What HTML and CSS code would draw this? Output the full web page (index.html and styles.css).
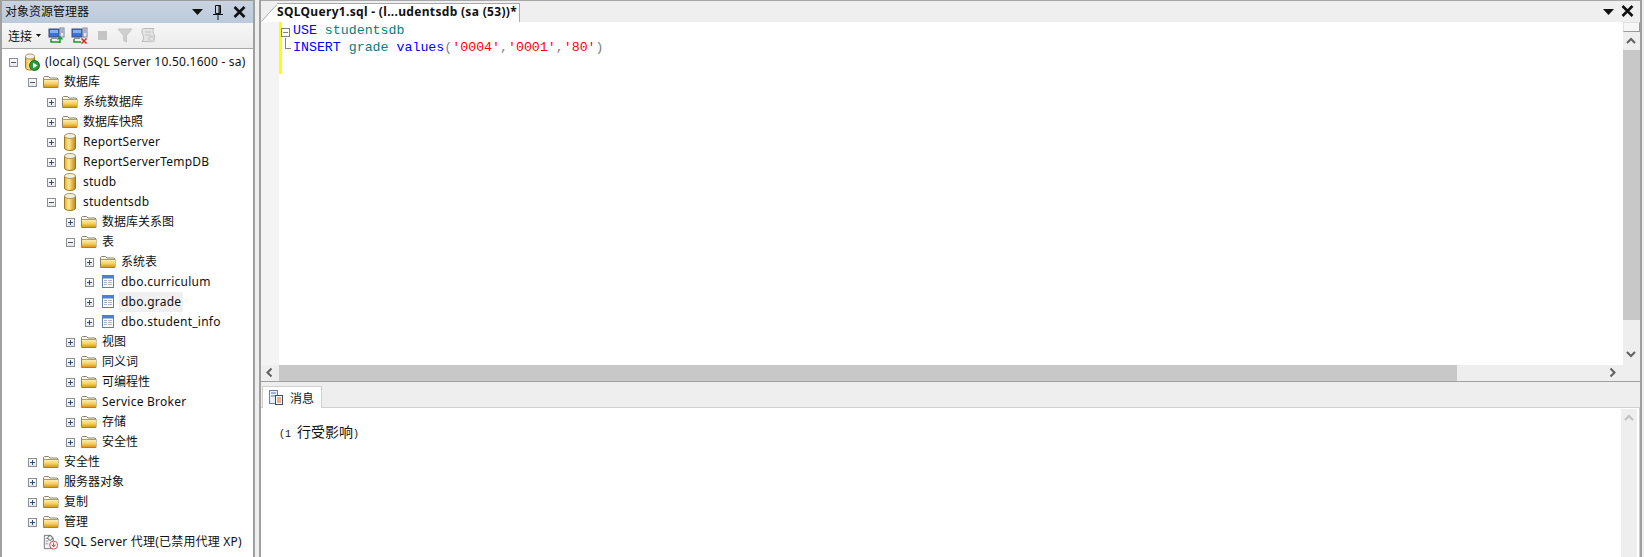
FILE: index.html
```html
<!DOCTYPE html>
<html lang="zh">
<head>
<meta charset="utf-8">
<title>SQL Server Management Studio</title>
<link rel="stylesheet" href="styles.css">
</head>
<body>
<svg class="defs" width="0" height="0" aria-hidden="true">
  <defs>
    <linearGradient id="fg" x1="0" y1="0" x2="0" y2="1"><stop offset="0" stop-color="#ffefb0"/><stop offset=".5" stop-color="#fbd060"/><stop offset="1" stop-color="#d89820"/></linearGradient>
    <linearGradient id="dg" x1="0" y1="0" x2="1" y2="0"><stop offset="0" stop-color="#e6b030"/><stop offset=".4" stop-color="#ffe890"/><stop offset="1" stop-color="#c08414"/></linearGradient>
    <symbol id="folder" viewBox="0 0 16 16"><path d="M.5 13.500V3.500l1-1h4l1.500 1.500h7l1 1v8.500z" fill="#f8f6e8" stroke="#8c8468"/><rect x="1" y="6" width="14" height="7" fill="url(#fg)"/><path d="M1 5.500h14" stroke="#a89c70"/></symbol>
    <symbol id="db" viewBox="0 0 16 20"><path d="M2.500 4v12c0 1.500 2.500 2.500 5.500 2.500s5.500-1 5.500-2.500V4z" fill="url(#dg)" stroke="#a07818"/><ellipse cx="8" cy="4" rx="5.500" ry="2.500" fill="#f4f0e0" stroke="#a89868"/></symbol>
    <symbol id="table" viewBox="0 0 16 16"><rect x="2.500" y="1.500" width="11" height="12" fill="#fff" stroke="#5a80b8"/><rect x="2" y="1" width="12" height="3.500" fill="#4f7fd0"/><path d="M4 6.500h3M8 6.500h4M4 8.500h3M8 8.500h4M4 10.500h3M8 10.500h4" stroke="#a8b4c4"/></symbol>
    <symbol id="server" viewBox="0 0 16 18"><path d="M1.500 3.500v11c0 1.500 2 2.500 4.500 2.500s4.500-1 4.500-2.500v-11z" fill="url(#dg)" stroke="#a07818"/><ellipse cx="6" cy="3.500" rx="4.500" ry="2.500" fill="#f4f0e0" stroke="#a89868"/><circle cx="10.500" cy="12.500" r="5" fill="#2c9a3c" stroke="#1a6e2c"/><path d="M9 9.800l4.500 2.700L9 15.200z" fill="#fff"/></symbol>
    <symbol id="agent" viewBox="0 0 18 18"><path d="M1.500 16.500v-15h7l3 3v12z" fill="#f4f4f4" stroke="#6a6a7a"/><path d="M3 5h4M3 8h3M3 11h3" stroke="#8a8a9a"/><circle cx="8" cy="4.500" r="2.500" fill="#fff" stroke="#555"/><circle cx="12" cy="12.500" r="4.500" fill="#fff" stroke="#c04040"/><path d="M12 9.500v4M10 12l2 2.500 2-2.500" stroke="#c02020" fill="none"/></symbol>
    <symbol id="monitor" viewBox="0 0 17 17"><rect x="1" y="2" width="10" height="8" fill="#3a70d8" stroke="#3c4c78"/><rect x="2" y="3" width="8" height="3" fill="#80b0f0"/><rect x="12" y="1" width="4" height="9" fill="#e8e8f0" stroke="#7a8098"/><path d="M13 3h2M13 5h2" stroke="#6a7088"/><rect x="3" y="10" width="6" height="2" fill="#8a90a4"/></symbol>
  </defs>
</svg>

<div class="app">
  <aside class="explorer">
    <header class="pane-title">
      <span class="pane-name">对象资源管理器</span>
      <svg class="ic-menu" width="11" height="6" viewBox="0 0 11 6"><path d="M0 0h11L5.500 6z" fill="#111"/></svg>
      <svg class="ic-pin" width="10" height="15" viewBox="0 0 10 15"><path d="M2.500.5h5v8h-5zM6 1v7M7 1v7M0 9.500h10M5 10v5" fill="none" stroke="#111"/></svg>
      <svg class="ic-close" width="13" height="12" viewBox="0 0 13 12"><path d="M1.500 1l10 10M11.500 1l-10 10" stroke="#111" stroke-width="2.600"/></svg>
    </header>
    <div class="pane-tools">
      <span class="connect">连接</span>
      <svg class="ic-caret" width="5" height="3" viewBox="0 0 5 3"><path d="M0 0h5L2.500 3z" fill="#111"/></svg>
      <svg class="tool t1" width="17" height="17" viewBox="0 0 17 17"><use href="#monitor"/><path d="M3 12v3h9" fill="none" stroke="#169a2c" stroke-width="1.500"/><path d="M12 16V10M9.500 12.500L12 10l2.500 2.500" fill="none" stroke="#169a2c" stroke-width="1.500"/></svg>
      <svg class="tool t2" width="17" height="17" viewBox="0 0 17 17"><use href="#monitor"/><path d="M3 12v3h7" fill="none" stroke="#169a2c" stroke-width="1.500"/><path d="M10.500 11.500l5 5M15.500 11.500l-5 5" stroke="#e02020" stroke-width="1.500"/></svg>
      <span class="stop"></span>
      <svg class="tool t3" width="16" height="15" viewBox="0 0 16 15"><path d="M1 1h14L9.500 7.500V14l-3-1.500v-5z" fill="#cfcfcf" stroke="#c4c4c4"/></svg>
      <svg class="tool t4" width="17" height="17" viewBox="0 0 17 17"><path d="M3 1.500h11c-2 2-1 4 0 6s1 5-1 7H2c2-2 2-4 1-6s-2-5 0-7z" fill="#e4e4e4" stroke="#bcbcbc"/><path d="M5 5h6M5 8h6" stroke="#c4c4c4"/><circle cx="11.500" cy="12" r="3.500" fill="#cfcfcf"/><path d="M10 10.500l3 3M13 10.500l-3 3" stroke="#f0f0f0"/></svg>
    </div>
    <ul class="tree">
      <li class="row l0"><span class="tog minus"></span><svg class="icon"><use href="#server"/></svg><span class="label latin">(local) (SQL Server 10.50.1600 - sa)</span></li>
      <li class="row l1"><span class="tog minus"></span><svg class="icon"><use href="#folder"/></svg><span class="label">数据库</span></li>
      <li class="row l2"><span class="tog plus"></span><svg class="icon"><use href="#folder"/></svg><span class="label">系统数据库</span></li>
      <li class="row l2"><span class="tog plus"></span><svg class="icon"><use href="#folder"/></svg><span class="label">数据库快照</span></li>
      <li class="row l2"><span class="tog plus"></span><svg class="icon"><use href="#db"/></svg><span class="label latin">ReportServer</span></li>
      <li class="row l2"><span class="tog plus"></span><svg class="icon"><use href="#db"/></svg><span class="label latin">ReportServerTempDB</span></li>
      <li class="row l2"><span class="tog plus"></span><svg class="icon"><use href="#db"/></svg><span class="label latin">studb</span></li>
      <li class="row l2"><span class="tog minus"></span><svg class="icon"><use href="#db"/></svg><span class="label latin">studentsdb</span></li>
      <li class="row l3"><span class="tog plus"></span><svg class="icon"><use href="#folder"/></svg><span class="label">数据库关系图</span></li>
      <li class="row l3"><span class="tog minus"></span><svg class="icon"><use href="#folder"/></svg><span class="label">表</span></li>
      <li class="row l4"><span class="tog plus"></span><svg class="icon"><use href="#folder"/></svg><span class="label">系统表</span></li>
      <li class="row l4"><span class="tog plus"></span><svg class="icon"><use href="#table"/></svg><span class="label latin">dbo.curriculum</span></li>
      <li class="row l4"><span class="tog plus"></span><svg class="icon"><use href="#table"/></svg><span class="label latin selected">dbo.grade</span></li>
      <li class="row l4"><span class="tog plus"></span><svg class="icon"><use href="#table"/></svg><span class="label latin">dbo.student_info</span></li>
      <li class="row l3"><span class="tog plus"></span><svg class="icon"><use href="#folder"/></svg><span class="label">视图</span></li>
      <li class="row l3"><span class="tog plus"></span><svg class="icon"><use href="#folder"/></svg><span class="label">同义词</span></li>
      <li class="row l3"><span class="tog plus"></span><svg class="icon"><use href="#folder"/></svg><span class="label">可编程性</span></li>
      <li class="row l3"><span class="tog plus"></span><svg class="icon"><use href="#folder"/></svg><span class="label latin">Service Broker</span></li>
      <li class="row l3"><span class="tog plus"></span><svg class="icon"><use href="#folder"/></svg><span class="label">存储</span></li>
      <li class="row l3"><span class="tog plus"></span><svg class="icon"><use href="#folder"/></svg><span class="label">安全性</span></li>
      <li class="row l1"><span class="tog plus"></span><svg class="icon"><use href="#folder"/></svg><span class="label">安全性</span></li>
      <li class="row l1"><span class="tog plus"></span><svg class="icon"><use href="#folder"/></svg><span class="label">服务器对象</span></li>
      <li class="row l1"><span class="tog plus"></span><svg class="icon"><use href="#folder"/></svg><span class="label">复制</span></li>
      <li class="row l1"><span class="tog plus"></span><svg class="icon"><use href="#folder"/></svg><span class="label">管理</span></li>
      <li class="row l1"><span class="tog none"></span><svg class="icon"><use href="#agent"/></svg><span class="label mixed">SQL Server 代理(已禁用代理 XP)</span></li>
    </ul>
  </aside>

  <main class="document">
    <div class="tabstrip">
      <svg class="tab-slant" width="16" height="20" viewBox="0 0 16 20"><path d="M0 20L15 3q1-1 1-1V20z" fill="#fff"/><path d="M.5 19.500L14 4.500q1.500-1.500 2-1.500" fill="none" stroke="#a8a8a8"/></svg>
      <div class="tab">SQLQuery1.sql - (l...udentsdb (sa (53))*</div>
      <svg class="ic-menu doc-menu" width="11" height="6" viewBox="0 0 11 6"><path d="M0 0h11L5.500 6z" fill="#111"/></svg>
      <svg class="ic-close doc-close" width="13" height="12" viewBox="0 0 13 12"><path d="M1.500 1l10 10M11.500 1l-10 10" stroke="#111" stroke-width="2.600"/></svg>
    </div>

    <section class="editor">
      <div class="editor-main">
        <div class="gutter"></div>
        <div class="change-bar"></div>
        <div class="fold">
          <span class="fold-box"></span>
          <span class="fold-line"></span>
        </div>
        <pre class="code"><span class="kw">USE</span> <span class="id">studentsdb</span>
<span class="kw">INSERT</span> <span class="id">grade</span> <span class="kw">values</span><span class="op">(</span><span class="str">'0004'</span><span class="op">,</span><span class="str">'0001'</span><span class="op">,</span><span class="str">'80'</span><span class="op">)</span></pre>
        <div class="vscroll">
          <div class="split-btn"></div>
          <svg class="arrow" width="16" height="18" viewBox="0 0 16 18"><path d="M4 11l4-4 4 4" fill="none" stroke="#606060" stroke-width="2"/></svg>
          <div class="v-thumb"></div>
          <div class="v-rest"></div>
          <svg class="arrow" width="16" height="20" viewBox="0 0 16 20"><path d="M4 7l4 4 4-4" fill="none" stroke="#606060" stroke-width="2"/></svg>
        </div>
      </div>
      <div class="hscroll">
        <svg class="arrow" width="18" height="15" viewBox="0 0 18 15"><path d="M10.500 3.500l-4 4 4 4" fill="none" stroke="#606060" stroke-width="2"/></svg>
        <div class="h-thumb"></div>
        <svg class="arrow h-right" width="18" height="15" viewBox="0 0 18 15"><path d="M5.500 3.500l4 4-4 4" fill="none" stroke="#606060" stroke-width="2"/></svg>
      </div>
    </section>

    <section class="results">
      <div class="result-tabs">
        <div class="result-tab">
          <svg width="16" height="17" viewBox="0 0 16 17"><rect x="1.500" y="1.500" width="8" height="13" fill="#e8f0fa" stroke="#6a80a8"/><path d="M3 4h5M3 7h5" stroke="#5878c0"/><rect x="7.500" y="6.500" width="7" height="9" fill="#fff" stroke="#384868"/><path d="M9 9h4M9 11h4M9 13h4" stroke="#d06020"/></svg>
          <span>消息</span>
        </div>
      </div>
      <div class="result-body">
        <p class="message"><span class="mono">(1 </span>行受影响<span class="mono">)</span></p>
        <div class="result-scroll">
          <svg width="16" height="18" viewBox="0 0 16 18"><path d="M4 11l4-4 4 4" fill="none" stroke="#c0c0c0" stroke-width="2"/></svg>
        </div>
      </div>
    </section>
  </main>
</div>
</body>
</html>
```
FILE: styles.css
```css
* { box-sizing: border-box; }
html, body { margin: 0; height: 100%; overflow: hidden; }
body {
  background: #eeeeee;
  font-family: "Noto Sans", "Noto Sans CJK SC", sans-serif;
  font-size: 12px;
  color: #111;
}
.defs { display: block; height: 0; }
.app { display: flex; height: 557px; width: 1644px; }

/* Object explorer */
.explorer {
  width: 255px;
  flex: none;
  display: flex;
  flex-direction: column;
  border-left: 2px solid #a0a0a0;
  border-right: 2px solid #a0a0a0;
  background: #fff;
}
.pane-title {
  height: 23px;
  flex: none;
  display: flex;
  align-items: center;
  background: linear-gradient(#c9d4e0, #bbc9da);
  border-top: 1px solid #9a9a9a;
  padding-left: 3px;
}
.pane-name { font-family: "Noto Sans CJK SC", sans-serif; font-size: 12px; width: 187px; margin-top: -3px; }
.ic-pin { margin-left: 10px; }
.ic-close { margin-left: 10px; }
.ic-pin { flex: none; }
.ic-menu { flex: none; }
.pane-tools {
  height: 26px;
  flex: none;
  display: flex;
  align-items: center;
  background: linear-gradient(#f6f6f6, #ececec);
  border-bottom: 1px solid #a8a8a8;
  padding-left: 6px;
}
.connect { font-family: "Noto Sans CJK SC", sans-serif; font-size: 12px; }
.ic-caret { margin-left: 4px; }
.tool { flex: none; }
.t1 { margin-left: 7px; }
.t2 { margin-left: 6px; }
.stop { width: 9px; height: 9px; background: #c4c4c4; margin-left: 10px; }
.t3 { margin-left: 10px; }
.t4 { margin-left: 7px; }

.tree { list-style: none; margin: 3px 0 0; padding: 0; flex: 1; overflow: hidden; }
.row { display: flex; align-items: center; height: 20px; white-space: nowrap; }
.l0 { padding-left: 7px; }
.l1 { padding-left: 26px; }
.l2 { padding-left: 45px; }
.l3 { padding-left: 64px; }
.l4 { padding-left: 83px; }
.tog {
  width: 9px;
  height: 9px;
  flex: none;
  border: 1px solid #8a8f98;
  background: linear-gradient(#fff, #e4e6ea);
  position: relative;
}
.tog.none { border: 0; background: none; }
.tog.plus::before, .tog.minus::before {
  content: "";
  position: absolute;
  left: 1px;
  top: 3px;
  width: 5px;
  height: 1px;
  background: #2f4a7c;
}
.tog.minus::before { background: #555; }
.tog.plus::after {
  content: "";
  position: absolute;
  left: 3px;
  top: 1px;
  width: 1px;
  height: 5px;
  background: #2f4a7c;
}
.icon { width: 16px; height: 20px; flex: none; margin-left: 6px; }
.label { margin-left: 3px; padding: 0 2px; line-height: 20px; }
.latin { letter-spacing: .24px; }
.mixed { letter-spacing: .2px; }
.selected { background: #f0f0f0; }

/* Document */
.document {
  flex: 1;
  min-width: 0;
  display: flex;
  flex-direction: column;
  margin-left: 4px;
  padding-right: 2px;
  border-left: 2px solid #a0a0a0;
}
.tabstrip {
  height: 22px;
  flex: none;
  display: flex;
  align-items: flex-end;
  background: #efefef;
  border-top: 1px solid #a8a8a8;
  border-right: 2px solid #a0a0a0;
}
.tab-slant { flex: none; }
.tab {
  height: 19px;
  width: 243px;
  flex: none;
  background: #fff;
  border-top: 1px solid #a8a8a8;
  border-right: 1px solid #a8a8a8;
  font-weight: 700;
  font-size: 12px;
  letter-spacing: .32px;
  line-height: 15px;
  white-space: nowrap;
}
.doc-menu { margin: 0 0 7px auto; }
.doc-close { margin: 0 6px 5px 7px; }

.editor {
  height: 360px;
  flex: none;
  display: flex;
  flex-direction: column;
  border-right: 2px solid #a0a0a0;
  border-bottom: 1px solid #a0a0a0;
}
.editor-main { flex: 1; min-height: 0; display: flex; background: #fff; }
.gutter { width: 18px; flex: none; background: #f4f4f4; }
.change-bar { width: 3px; height: 52px; flex: none; background: #ffff00; }
.fold { width: 11px; flex: none; margin-left: -1px; margin-right: 1px; padding-top: 6px; display: flex; flex-direction: column; }
.fold-box { width: 9px; height: 9px; border: 1px solid #808080; background: linear-gradient(#808080, #808080) center / 5px 1px no-repeat #fff; }
.fold-line { width: 6px; height: 11px; margin-left: 4px; border-left: 1px solid #808080; border-bottom: 1px solid #808080; margin-top: 1px; }
.code {
  flex: 1;
  min-width: 0;
  margin: 0;
  padding-top: 0;
  font-family: "Liberation Mono", monospace;
  font-size: 13.27px;
  line-height: 17px;
  color: #000;
}
.kw { color: #0000ff; }
.id { color: #008080; }
.op { color: #808080; }
.str { color: #ff0000; }
.vscroll {
  width: 17px;
  flex: none;
  display: flex;
  flex-direction: column;
  background: #eeeeee;
}
.split-btn { height: 10px; flex: none; background: #f6f6f6; border: 1px solid #9a9a9a; border-top-color: #e0e0e0; border-left-color: #e0e0e0; }
.arrow { flex: none; display: block; }
.v-thumb { height: 270px; flex: none; background: #c8c8c8; }
.v-rest { flex: 1; }
.hscroll { height: 16px; flex: none; display: flex; background: #eeeeee; }
.h-thumb { width: 1178px; flex: none; background: #c8c8c8; }
.h-right { margin-left: 148px; }

.results { flex: 1; min-height: 0; display: flex; flex-direction: column; border-right: 2px solid #a0a0a0; }
.result-tabs { height: 26px; flex: none; display: flex; align-items: flex-end; padding-left: 1px; border-bottom: 1px solid #d0d0d0; }
.result-tab {
  width: 60px;
  height: 22px;
  margin-bottom: -1px;
  display: flex;
  align-items: center;
  gap: 6px;
  padding-left: 5px;
  background: #fff;
  border: 1px solid #d0d0d0;
  border-bottom: 0;
  font-family: "Noto Sans CJK SC", sans-serif;
  font-size: 12px;
}
.result-body { flex: 1; min-height: 0; display: flex; background: #fff; border-right: 1px solid #cccccc; padding-right: 2px; }
.message {
  flex: 1;
  margin: 15px 0 0;
  padding-left: 18px;
  font-family: "Noto Sans CJK SC", sans-serif;
  font-size: 14px;
  line-height: 17px;
}
.mono { font-family: "Liberation Mono", monospace; font-size: 10px; }
.result-scroll { width: 16px; flex: none; background: #eeeeee; margin-top: 1px; }
.result-scroll svg { display: block; }
```
